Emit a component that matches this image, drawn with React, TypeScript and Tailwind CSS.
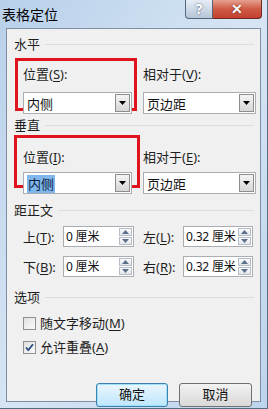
import React from "react";

const font = "font-['Noto_Sans','Noto_Sans_CJK_SC',sans-serif]";

function Arrow() {
  return (
    <svg width="7" height="4" viewBox="0 0 7 4">
      <path d="M0 0h7L3.5 4z" fill="#000" />
    </svg>
  );
}

function Combo({ value, selected, width }: { value: string; selected?: boolean; width: string }) {
  return (
    <div className={`flex h-[22px] ${width} items-center border border-[#abadb3] bg-white`}>
      <div className="flex-1 pl-[3px]">
        <span
          className={
            selected
              ? "bg-[#7fb7ec] px-[1px] text-[13px] leading-[17px] text-[#0c1c3c]"
              : "text-[13px] leading-[17px] text-[#111]"
          }
        >
          {value}
        </span>
      </div>
      <div className="mr-[1px] flex h-[18px] w-[15px] items-center justify-center border border-[#8d8d8d] bg-gradient-to-b from-[#f4f4f4] to-[#d6d6d6]">
        <Arrow />
      </div>
    </div>
  );
}

function Spin({ value, width }: { value: string; width: string }) {
  return (
    <div className={`flex h-[21px] ${width} items-center border border-[#abadb3] bg-white`}>
      <div className="flex-1 pl-[2px] text-[12px] leading-[17px] tracking-[-0.2px] text-[#111] whitespace-nowrap">
        {value}
      </div>
      <div className="mr-[1px] flex h-[17px] w-[13px] flex-col gap-[1px]">
        <div className="flex flex-1 items-center justify-center border border-[#b5bcc6] bg-gradient-to-b from-[#fbfbfb] to-[#e3e6ea]">
          <svg width="7" height="4" viewBox="0 0 7 4">
            <path d="M3.5 0L7 4H0z" fill="#5a6f8a" />
          </svg>
        </div>
        <div className="flex flex-1 items-center justify-center border border-[#b5bcc6] bg-gradient-to-b from-[#fbfbfb] to-[#e3e6ea]">
          <svg width="7" height="4" viewBox="0 0 7 4">
            <path d="M0 0h7L3.5 4z" fill="#5a6f8a" />
          </svg>
        </div>
      </div>
    </div>
  );
}

function Header({ text, mt }: { text: string; mt: string }) {
  return (
    <div className={`flex h-[16px] items-center pl-[7px] pr-[6px] ${mt}`}>
      <span className="text-[13px] leading-[16px] text-[#1e1e1e]">{text}</span>
      <div className="ml-[5px] h-px flex-1 bg-[#d5dfe5]" />
    </div>
  );
}

function Label({ main, k, rest = "):" }: { main: string; k: string; rest?: string }) {
  return (
    <span className="text-[13px] leading-[14px] text-[#1e1e1e] whitespace-nowrap">
      {main}(<span className="underline underline-offset-2">{k}</span>
      {rest}
    </span>
  );
}

function Checkbox({ checked }: { checked?: boolean }) {
  return (
    <div className="flex h-[13px] w-[13px] items-center justify-center border border-[#8f8f8f] bg-gradient-to-br from-[#e0e0e0] to-[#fbfbfb]">
      {checked && (
        <svg width="9" height="9" viewBox="0 0 9 9">
          <path d="M1 4.5l2.3 2.6L8 1.2" stroke="#2c4a84" strokeWidth="1.8" fill="none" />
        </svg>
      )}
    </div>
  );
}

export default function App() {
  return (
    <div
      className={`relative h-[409px] w-[268px] overflow-hidden border-r border-b border-[#5b6b80] bg-gradient-to-br from-[#b8d0ea] via-[#d6e5f4] to-[#bcd4ec] ${font}`}
    >
      <div className="flex h-[28px] items-start justify-between">
        <span className="mt-[6px] pl-[2px] text-[14px] leading-[17px] text-black">表格定位</span>
        <div className="mr-[5px] flex h-[19px]">
          <div className="flex w-[28px] items-center justify-center rounded-bl-[4px] border border-t-0 border-[#55667c] bg-gradient-to-b from-[#e6edf5] to-[#b7c6d8] text-[14px] font-bold leading-none text-white [text-shadow:0_0_2px_#33455c]">
            ?
          </div>
          <div className="flex w-[49px] items-center justify-center rounded-br-[4px] border border-t-0 border-l-0 border-[#6b2a24] bg-gradient-to-b from-[#e6a08f] via-[#cf5a46] to-[#c2412e] text-[14px] font-bold leading-none text-white [text-shadow:0_0_2px_#5a1a12]">
            ✕
          </div>
        </div>
      </div>

      <div className="ml-[6px] h-[374px] w-[255px] border border-[#7d8ea5] bg-[#f0f0f0]">
        <Header text="水平" mt="mt-[7px]" />

        <div className="mt-[6px] flex">
          <div className="ml-[8px] h-[53px] w-[122px] border-[3px] border-[#e0141c] pl-[5px]">
            <Label main="位置" k="S" />
            <div className="mt-[7px]">
              <Combo value="内侧" width="w-[109px]" />
            </div>
          </div>
          <div className="ml-[6px] pt-[3px]">
            <Label main="相对于" k="V" />
            <div className="mt-[7px]">
              <Combo value="页边距" width="w-[113px]" />
            </div>
          </div>
        </div>

        <Header text="垂直" mt="mt-[3px]" />

        <div className="mt-[2px] flex">
          <div className="ml-[7px] h-[53px] w-[126px] border-[3px] border-[#e0141c] pl-[6px] pt-[6px]">
            <Label main="位置" k="I" />
            <div className="mt-[4px]">
              <Combo value="内侧" selected width="w-[109px]" />
            </div>
          </div>
          <div className="ml-[3px] pt-[9px]">
            <Label main="相对于" k="E" />
            <div className="mt-[4px]">
              <Combo value="页边距" width="w-[113px]" />
            </div>
          </div>
        </div>

        <Header text="距正文" mt="mt-[8px]" />

        <div className="mt-[6px] flex items-center pl-[16px]">
          <div className="w-[40px]">
            <Label main="上" k="T" />
          </div>
          <Spin value="0 厘米" width="w-[71px]" />
          <div className="ml-[9px] w-[40px]">
            <Label main="左" k="L" />
          </div>
          <Spin value="0.32 厘米" width="w-[70px]" />
        </div>
        <div className="mt-[6px] flex items-center pl-[16px]">
          <div className="w-[40px]">
            <Label main="下" k="B" />
          </div>
          <Spin value="0 厘米" width="w-[71px]" />
          <div className="ml-[9px] w-[40px]">
            <Label main="右" k="R" />
          </div>
          <Spin value="0.32 厘米" width="w-[70px]" />
        </div>

        <Header text="选项" mt="mt-[11px]" />

        <div className="mt-[10px] flex h-[16px] items-center gap-[4px] pl-[16px]">
          <Checkbox />
          <Label main="随文字移动" k="M" rest=")" />
        </div>
        <div className="mt-[8px] flex h-[16px] items-center gap-[4px] pl-[16px]">
          <Checkbox checked />
          <Label main="允许重叠" k="A" rest=")" />
        </div>

        <div className="mt-[28px] flex justify-end gap-[11px] pr-[8px]">
          <div className="flex h-[24px] w-[72px] items-center justify-center rounded-[3px] border border-[#3c7fb1] bg-gradient-to-b from-[#eaf6fd] to-[#bee6fd] shadow-[inset_0_0_0_1px_#9fe0fb] text-[13px] text-[#111]">
            确定
          </div>
          <div className="flex h-[24px] w-[73px] items-center justify-center rounded-[3px] border border-[#707070] bg-gradient-to-b from-[#f2f2f2] to-[#d9d9d9] text-[13px] text-[#111]">
            取消
          </div>
        </div>
      </div>
    </div>
  );
}
